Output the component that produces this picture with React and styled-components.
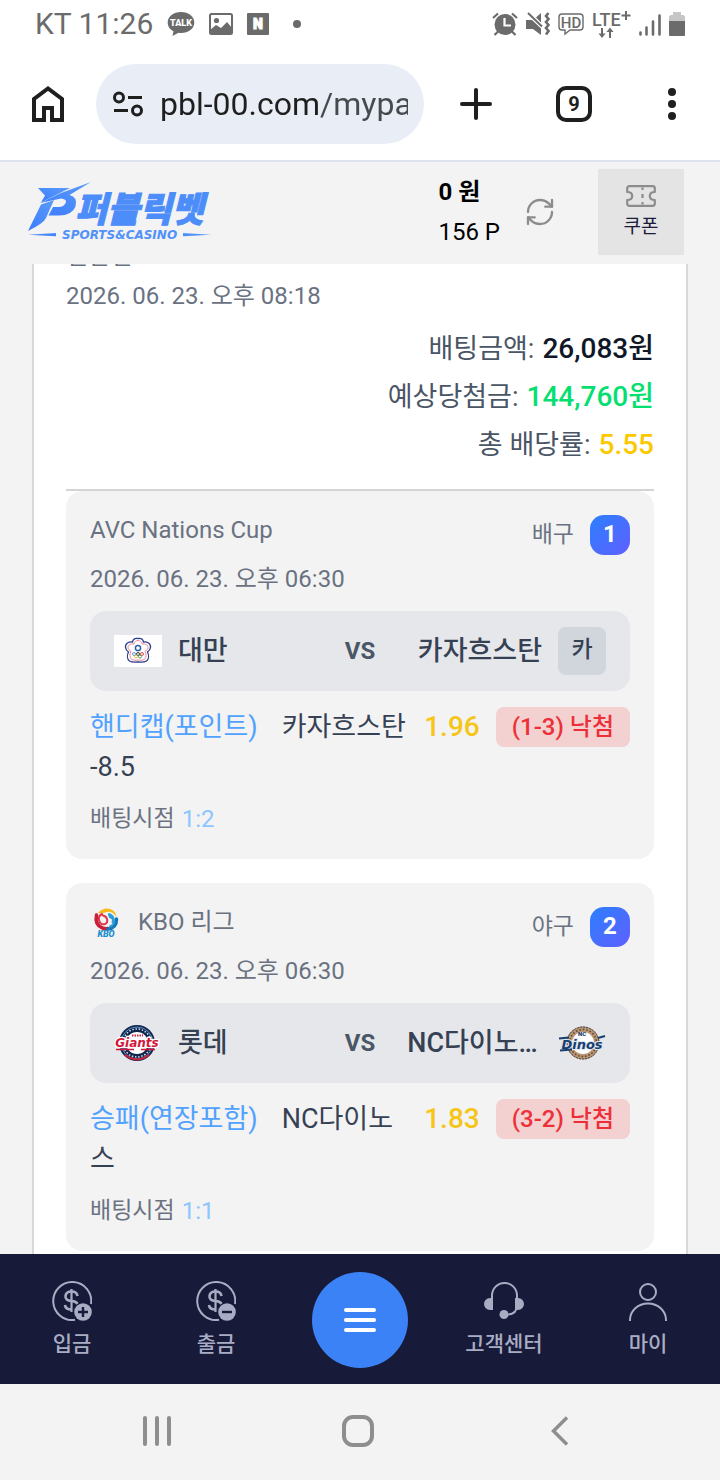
import React, { useState } from 'react';
import styled, { createGlobalStyle } from 'styled-components';
import { RefreshCw } from 'lucide-react';

const GlobalStyle = createGlobalStyle`
    *, *::before, *::after {
        box-sizing: border-box;
    }
    body {
        margin: 0;
        background: #f3f3f3;
        color: #364153;
        font-family: Roboto, "Noto Sans CJK KR", sans-serif;
        font-size: 24px;
        line-height: 32px;
    }
    button, input {
        font: inherit;
        color: inherit;
        border: 0;
        padding: 0;
        background: none;
    }
    h2, h3, p {
        margin: 0;
        font: inherit;
    }
    a {
        color: inherit;
        text-decoration: none;
    }
    svg {
        display: block;
        flex: none;
    }
`;

const Screen = styled.div`
    display: flex;
    flex-direction: column;
    height: 100vh;
    overflow: hidden;
`;

const StatusBar = styled.div`
    display: flex;
    flex: none;
    align-items: center;
    justify-content: space-between;
    height: 48px;
    padding: 0 35px;
    background: #fff;
    color: #6b6b6b;
`;

const StatusGroup = styled.div`
    display: flex;
    align-items: center;
    gap: ${props => props.$gap}px;
`;

const Clock = styled.span`
    font-size: 30px;
`;

const Toolbar = styled.div`
    display: flex;
    flex: none;
    align-items: center;
    height: 114px;
    padding: 0 24px;
    border-bottom: 2px solid #dde3ec;
    background: #fff;
    color: #1f1f1f;
`;

const ToolButton = styled.button`
    display: flex;
    flex: none;
    align-items: center;
    justify-content: center;
    width: 48px;
    height: 48px;
`;

const AddressBar = styled.label`
    display: flex;
    flex: 1;
    align-items: center;
    gap: 16px;
    min-width: 0;
    height: 80px;
    margin: 0 28px 0 24px;
    padding: 0 16px;
    border-radius: 40px;
    background: #e8edf6;
`;

const AddressInput = styled.input`
    flex: 1;
    min-width: 0;
    height: 48px;
    font-size: 32px;
    outline: none;
    color: transparent;
    background: linear-gradient(to right, #1f1f1f 159px, #474a4d 159px);
    background-clip: text;
    -webkit-background-clip: text;
`;

const ToolActions = styled.div`
    display: flex;
    gap: 50px;
`;

const TabCount = styled.span`
    display: flex;
    align-items: center;
    justify-content: center;
    width: 36px;
    height: 36px;
    border: 4px solid #1f1f1f;
    border-radius: 10px;
    font-size: 20px;
    font-weight: 700;
`;

const SiteHeader = styled.header`
    display: flex;
    flex: none;
    align-items: center;
    height: 102px;
    padding: 0 36px 2px 28px;
    background: #f3f3f3;
`;

const Balance = styled.div`
    display: flex;
    flex-direction: column;
    gap: 8px;
    margin-left: auto;
    margin-right: 24px;
    color: #000;
`;

const Cash = styled.strong`
    font-weight: 700;
`;

const RefreshButton = styled.button`
    margin-right: 42px;
    color: #8c8c8c;
`;

const CouponButton = styled.button`
    display: flex;
    flex-direction: column;
    align-items: center;
    justify-content: center;
    gap: 4px;
    width: 86px;
    height: 86px;
    padding-top: 4px;
    background: #e4e4e4;
    color: #1b1b3a;
    font-size: 19px;
`;

const Content = styled.main`
    flex: 1;
    min-height: 0;
    padding: 0 32px;
    overflow: hidden;
`;

const Panel = styled.section`
    margin-top: -24px;
    padding: 0 32px 24px;
    border: solid #d9d9d9;
    border-width: 0 2px;
    background: #fff;
    color: #6a7282;
`;

const BetKind = styled.h2`
    padding-bottom: 8px;
`;

const Totals = styled.dl`
    display: flex;
    flex-direction: column;
    gap: 8px;
    margin: 0;
    padding: 17px 0 24px;
    border-bottom: 2px solid #d4d4d4;
`;

const TotalRow = styled.div`
    display: flex;
    justify-content: flex-end;
    gap: 8px;
    font-size: 27px;
    line-height: 40px;
    color: #4a5565;

    dd {
        margin: 0;
        font-weight: 500;
        font-size: 28px;
        color: ${props => props.$color};
    }
`;

const CardList = styled.div`
    display: flex;
    flex-direction: column;
    gap: 24px;
`;

const Card = styled.article`
    padding: 24px;
    border-radius: 16px;
    background: #f3f3f3;
`;

const CardHead = styled.div`
    display: flex;
    align-items: flex-start;
    justify-content: space-between;
    height: 40px;
    margin-bottom: 8px;
`;

const League = styled.h3`
    display: flex;
    gap: 16px;
    line-height: 30px;
`;

const Sport = styled.div`
    display: flex;
    gap: 16px;
    font-size: 23px;
    line-height: 40px;
`;

const Order = styled.span`
    width: 40px;
    height: 40px;
    border-radius: 14px;
    background: linear-gradient(135deg, #2b7fff, #615fff);
    color: #fff;
    font-size: 24px;
    font-weight: 700;
    line-height: 38px;
    text-align: center;
`;

const Match = styled.div`
    display: grid;
    grid-template-columns: 1fr auto 1fr;
    align-items: center;
    gap: 32px;
    height: 80px;
    margin: 16px 0;
    padding: 0 24px;
    border-radius: 16px;
    background: #e5e7eb;
    color: #364153;
`;

const Team = styled.div`
    display: flex;
    align-items: center;
    justify-content: ${props => props.$away ? 'flex-end' : 'flex-start'};
    gap: 16px;
    min-width: 0;
`;

const TeamName = styled.span`
    overflow: hidden;
    font-size: 27px;
    font-weight: 500;
    line-height: 40px;
    text-overflow: ellipsis;
    white-space: nowrap;
`;

const Versus = styled.span`
    color: #4a5565;
    font-weight: 700;
    line-height: 30px;
`;

const Initial = styled.span`
    flex: none;
    width: 48px;
    height: 48px;
    border-radius: 8px;
    background: #d1d5dc;
    font-size: 23px;
    font-weight: 500;
    line-height: 46px;
    text-align: center;
`;

const BetRow = styled.div`
    display: flex;
    align-items: flex-start;
    gap: 16px;
    margin-bottom: 16px;
    font-size: 27px;
    line-height: 40px;
`;

const Pick = styled.p`
    flex: 1;
    min-width: 0;
    color: #364153;
`;

const Market = styled.span`
    margin-right: 24px;
    color: #51a2ff;
`;

const Odds = styled.span`
    color: #f5c518;
    font-size: 28px;
    font-weight: 500;
`;

const Result = styled.span`
    padding: 0 16px;
    border-radius: 8px;
    background: #f3d1d1;
    color: #ed2f38;
    font-size: 24px;
    font-weight: 500;
`;

const BetPoint = styled.p`
    display: flex;
    gap: 7px;
    font-size: 23px;
    line-height: 32px;

    span {
        color: #8ec5ff;
        font-size: 24px;
    }
`;

const BottomNav = styled.nav`
    display: grid;
    flex: none;
    grid-template-columns: repeat(5, 1fr);
    align-items: center;
    justify-items: center;
    height: 130px;
    padding-top: 2px;
    background: #171a38;
    color: #a9adc4;
`;

const NavLink = styled.a`
    display: flex;
    flex-direction: column;
    align-items: center;
    gap: 8px;
    font-size: 21px;
    font-weight: 500;
    line-height: 30px;
`;

const MenuButton = styled.button`
    display: flex;
    align-items: center;
    justify-content: center;
    width: 96px;
    height: 96px;
    border-radius: 50%;
    background: #3b82f6;
`;

const SystemNav = styled.div`
    display: grid;
    flex: none;
    grid-template-columns: repeat(3, 1fr);
    place-items: center;
    height: 96px;
    padding: 0 60px 2px 56px;
    background: #f3f3f3;
`;

const TalkIcon = () => (
    <svg width="28" height="26" viewBox="0 0 28 26">
        <path d="M14 1C6.500 1 .7 5.500 .7 11.500c0 3.800 2.300 7 5.800 8.800L5.500 25l6-3.200c.8.1 1.700.2 2.500.2 7.500 0 13.300-4.500 13.300-10.500S21.500 1 14 1z" fill="#6b6b6b" />
        <text x="14" y="15" fontSize="9" fontWeight="900" textAnchor="middle" fill="#fff">TALK</text>
    </svg>
);

const PhotoIcon = () => (
    <svg width="24" height="22" viewBox="0 0 24 22">
        <rect x="1" y="1" width="22" height="20" rx="1.500" fill="none" stroke="#6b6b6b" strokeWidth="2" />
        <circle cx="7.500" cy="7.500" r="2.600" fill="#6b6b6b" />
        <path d="M1 21v-4l6-5 5 3 6-6 5 6v6z" fill="#6b6b6b" />
    </svg>
);

const NoteIcon = () => (
    <svg width="22" height="22" viewBox="0 0 22 22">
        <rect width="22" height="22" rx="1" fill="#6b6b6b" />
        <text x="11" y="16" fontSize="14" fontWeight="900" textAnchor="middle" fill="#fff" stroke="#fff">N</text>
    </svg>
);

const AlarmIcon = () => (
    <svg width="26" height="24" viewBox="0 0 26 24" fill="none" stroke="#6b6b6b" strokeWidth="2.200">
        <path d="M1 6l5-4.500M25 6l-5-4.500M6 19.500L2.500 23M20 19.500l3.500 3.500" />
        <circle cx="13" cy="12.500" r="10.500" fill="#6b6b6b" stroke="none" />
        <path d="M12.500 6v7.500H19" stroke="#fff" />
    </svg>
);

const MuteIcon = () => (
    <svg width="24" height="24" viewBox="0 0 24 24" fill="#6b6b6b">
        <path d="M0 8h6l9 8.500V23l-8-6H0zM10 5.500L15 1v9.500z" />
        <path d="M2 1l14 13.500" stroke="#6b6b6b" strokeWidth="2" />
        <path d="M22.500 1l-2.500 3 2.500 3-2.500 3 2.500 3-2.500 3 2.500 3-2.500 3.500" fill="none" stroke="#6b6b6b" strokeWidth="2.600" />
    </svg>
);

const HdIcon = () => (
    <svg width="26" height="24" viewBox="0 0 26 24">
        <path d="M4 2h18a3 3 0 0 1 3 3v10a3 3 0 0 1-3 3H12l-5 4v-4H4a3 3 0 0 1-3-3V5a3 3 0 0 1 3-3z" fill="none" stroke="#6b6b6b" strokeWidth="1.400" />
        <text x="13" y="15.500" fontSize="15" fontWeight="500" textAnchor="middle" fill="#6b6b6b">HD</text>
    </svg>
);

const LteIcon = () => (
    <svg width="39" height="30" viewBox="0 0 39 30" fill="#6b6b6b">
        <text x="0" y="17" fontSize="18" fontWeight="500">LTE</text>
        <path d="M34 2v9M29.500 6.500h9" stroke="#6b6b6b" strokeWidth="2" />
        <path d="M10 19v8M18 21v8" stroke="#6b6b6b" strokeWidth="2" />
        <path d="M6.500 24.500h7L10 29zM14.500 23h7L18 18.500z" />
    </svg>
);

const SignalIcon = () => (
    <svg width="22" height="24" viewBox="0 0 22 24" stroke="#6b6b6b" strokeWidth="2.600" strokeLinecap="round">
        <path d="M1.500 20.500v2M7.500 15.500v7M14 9.500v13M20.500 3.500v19" />
    </svg>
);

const BatteryIcon = () => (
    <svg width="16" height="24" viewBox="0 0 16 24">
        <path d="M4 0h8v3h2.500L16 4.500V10H0V4.500L1.500 3H4z" fill="#c6c6c6" />
        <path d="M0 9h16v14a1 1 0 0 1-1 1H1a1 1 0 0 1-1-1z" fill="#6b6b6b" />
    </svg>
);

const HomeIcon = () => (
    <svg width="32" height="36" viewBox="0 0 32 36">
        <path d="M2 34V13L16 2.500 30 13v21H20V22h-8v12z" fill="none" stroke="#1f1f1f" strokeWidth="4" />
    </svg>
);

const TuneIcon = () => (
    <svg width="32" height="28" viewBox="0 0 32 28" fill="none" stroke="#1f1f1f" strokeWidth="3">
        <circle cx="7" cy="7.500" r="4.500" />
        <path d="M16 7.500h14M2 20.500h14" />
        <circle cx="25" cy="20.500" r="4.500" />
    </svg>
);

const SiteLogo = () => (
    <svg width="186" height="60" viewBox="0 0 186 60" fill="url(#brand)">
        <defs>
            <linearGradient id="brand" x1="0" y1="1" x2="1" y2="0">
                <stop offset="0" stopColor="#3b7cff" />
                <stop offset="1" stopColor="#5b9cf8" />
            </linearGradient>
        </defs>
        <path d="M10 6H42L13 20.500l4-7z" />
        <path d="M63 0L41.500 13q8.500 2 6 11.500Q44 33.500 31 33.500H20.500L25 25h5.500q6 0 7.500-5 .5-3-5-3.500L12 21l21-10z" />
        <path d="M13 22.500L26 18l-8 18q-2 5-18 13z" />
        <path d="M0 52.800l28-1.800v3.200zM183 52.800L155 51v3.200z" />
        <text x="47" y="40" fontFamily="'Noto Sans CJK KR', sans-serif" fontSize="35" fontWeight="900" fontStyle="italic" fill="#4c8dfa" stroke="#4c8dfa">퍼블릭벳</text>
        <text x="34" y="57" fontFamily="'DejaVu Sans', sans-serif" fontSize="12" fontWeight="700" fontStyle="italic" fill="#5191fa">SPORTS&amp;CASINO</text>
    </svg>
);

const CouponIcon = () => (
    <svg width="30" height="22" viewBox="0 0 30 22" fill="none" stroke="#8c8c8c" strokeWidth="2.200" strokeLinejoin="round">
        <path d="M3.500 1.200h23q2.300 0 2.300 2.300V7q-5 0-5 4t5 4v3.500q0 2.300-2.300 2.300h-23q-2.300 0-2.300-2.300V15q5 0 5-4t-5-4V3.500q0-2.300 2.300-2.300z" />
        <path d="M16.500 2.500V5M16.500 9v4M16.500 17v2.500" />
    </svg>
);

const TaiwanFlag = () => (
    <svg width="48" height="32" viewBox="0 0 48 32">
        <rect width="48" height="32" fill="#fff" />
        <g fill="none" strokeLinejoin="round">
            <path d="M24 3.500c3-.5 5 1 5.500 3.500 3.500-.5 7.500 1.500 7 5.500-.2 2-1.500 3.300-3 4.500 1.500 3 1.500 7-1 9-2.500 1.500-5.500 1.300-8.500 1-3 .3-6 .5-8.500-1-2.500-2-2.500-6-1-9-1.500-1.200-2.800-2.500-3-4.500-.5-4 3.500-6 7-5.500.5-2.500 2.500-4 5.500-3.500z" stroke="#2c3d8f" strokeWidth="1.300" />
            <path d="M24 5.500c2.200 0 3.500 1.300 4 3.500 3-.5 6 .8 6 3.500 0 1.800-1.300 3-3 3.800 1.500 3 1.500 6-.5 8-2 1.200-4 1-6.500.7-2.500.3-4.500.5-6.500-.7-2-2-2-5-.5-8-1.700-.8-3-2-3-3.800 0-2.700 3-4 6-3.500.5-2.200 1.800-3.500 4-3.500z" stroke="#e8899a" />
            <circle cx="24" cy="13" r="2.600" stroke="#2f5ea8" strokeWidth="1.500" />
            <circle cx="20" cy="19" r="1.500" stroke="#5b9bd5" />
            <circle cx="24" cy="19" r="1.500" stroke="#333" />
            <circle cx="28" cy="19" r="1.500" stroke="#d84a4a" />
            <circle cx="22" cy="21.500" r="1.500" stroke="#e6b93c" />
            <circle cx="26" cy="21.500" r="1.500" stroke="#4fa267" />
        </g>
    </svg>
);

const KboLogo = () => (
    <svg width="32" height="32" viewBox="0 0 32 32" fill="none" strokeLinecap="round">
        <path d="M8 6Q13 0 20 2q6 2 6.500 8-4-6-10-5-4 2-8.500 1z" fill="#fbb81b" />
        <path d="M6.500 8q-2 10 6 13 3 1 5 .5" stroke="#c91f38" strokeWidth="3.500" />
        <path d="M12 7q-4 2-3 6 1 5 6 4 3-1 2-5-1-3-4-3.500" stroke="#e0364a" strokeWidth="2" />
        <path d="M26.500 12q0 9-8.500 10" stroke="#1478b6" strokeWidth="3.500" />
        <path d="M19 7q5 2 5 7 0 4-4 5.500M19 7q0 3 2.500 4t1 4" stroke="#2a9fd8" strokeWidth="2" />
        <text x="16" y="30" fontSize="9" fontWeight="900" fontStyle="italic" textAnchor="middle" fill="#1d8fce">KBO</text>
    </svg>
);

const GiantsLogo = () => (
    <svg width="48" height="40" viewBox="0 0 48 40">
        <circle cx="23" cy="20" r="18" fill="#10264d" />
        <circle cx="23" cy="20" r="16" fill="none" stroke="#5d93c9" />
        <circle cx="23" cy="20" r="14" fill="none" stroke="#d7e0ea" strokeWidth="1.500" strokeDasharray="1.500 1.700" />
        <circle cx="23" cy="20" r="11" fill="#fff" />
        <path d="M10 32a18 18 0 0 0 26 0l-2-1a16 16 0 0 1-22 0z" fill="#c8213c" />
        <path d="M18 12.500h11" stroke="#c8213c" strokeWidth="2" strokeDasharray="1.500 1" />
        <text x="23" y="24" fontFamily="'DejaVu Sans', sans-serif" fontSize="12" fontWeight="700" fontStyle="italic" textAnchor="middle" fill="#d2163a" stroke="#fff" strokeWidth="2.500" paintOrder="stroke">Giants</text>
        <path d="M2 26.500h18M27 26.500h14" stroke="#d2163a" strokeWidth="1.300" />
    </svg>
);

const DinosLogo = () => (
    <svg width="48" height="40" viewBox="0 0 48 40">
        <circle cx="25" cy="20" r="16.500" fill="#b99671" />
        <circle cx="25" cy="20" r="16" fill="none" stroke="#3a4048" strokeDasharray="2 1" />
        <circle cx="25" cy="20" r="13.500" fill="none" stroke="#55463a" strokeWidth="1.500" strokeDasharray="1.500 2" />
        <circle cx="25" cy="20" r="11" fill="#fff" />
        <text x="24" y="13" fontSize="6" fontWeight="900" textAnchor="middle" fill="#173a66">NC</text>
        <text x="24" y="26" fontFamily="'DejaVu Sans', sans-serif" fontSize="13" fontWeight="700" fontStyle="italic" textAnchor="middle" fill="#173f70" stroke="#dfe5ec" strokeWidth="2" paintOrder="stroke">Dinos</text>
        <path d="M1 15.500l10-1M2 27.500l12-1M40 15l7-2" stroke="#173f70" strokeWidth="2" />
    </svg>
);

const CoinIcon = ({ minus }) => (
    <svg width="40" height="40" viewBox="0 0 40 40" fill="none" stroke="#a9adc4" strokeWidth="2">
        <path d="M39 23a19 19 0 1 0-16 15.800" />
        <path d="M25.500 15q-.5-4.500-6-4.500t-6 4.500 6 5 6.500 5M13 24q.5 4.500 6.500 4.500" strokeWidth="2.600" />
        <path d="M19.500 8v23" strokeWidth="2.200" />
        <circle cx="31" cy="31" r="10" fill="#171a38" stroke="none" />
        <circle cx="31" cy="31" r="8.800" fill="#a9adc4" stroke="none" />
        <path d={minus ? 'M26 31h10' : 'M26 31h10M31 26v10'} stroke="#171a38" strokeWidth="2.400" />
    </svg>
);

const HeadsetIcon = () => (
    <svg width="40" height="40" viewBox="0 0 40 40" fill="#a9adc4">
        <path d="M8 24V14.500a12.500 12.500 0 0 1 25 0V24q0 9-9 9.500h-4" fill="none" stroke="#a9adc4" strokeWidth="2" />
        <path d="M9 17v12H6A6 6 0 0 1 6 17zM31 17v12h3a6 6 0 0 0 0-12z" />
        <circle cx="20" cy="33.500" r="4.500" />
    </svg>
);

const PersonIcon = () => (
    <svg width="40" height="40" viewBox="0 0 40 40" fill="none" stroke="#a9adc4" strokeWidth="2">
        <circle cx="20" cy="11" r="8" />
        <path d="M2 40v-1a18 16.500 0 0 1 36 0v1" />
    </svg>
);

const bets = [
    {
        id: 1,
        league: 'AVC Nations Cup',
        sport: '배구',
        date: '2026. 06. 23. 오후 06:30',
        home: '대만',
        homeIcon: <TaiwanFlag />,
        away: '카자흐스탄',
        awayIcon: <Initial>카</Initial>,
        market: '핸디캡(포인트)',
        pick: '카자흐스탄 -8.5',
        odds: '1.96',
        result: '(1-3) 낙첨',
        point: '1:2'
    },
    {
        id: 2,
        league: 'KBO 리그',
        leagueIcon: <KboLogo />,
        sport: '야구',
        date: '2026. 06. 23. 오후 06:30',
        home: '롯데',
        homeIcon: <GiantsLogo />,
        away: 'NC다이노스',
        awayIcon: <DinosLogo />,
        market: '승패(연장포함)',
        pick: 'NC다이노스',
        odds: '1.83',
        result: '(3-2) 낙첨',
        point: '1:1'
    }
];

const BetCard = ({ bet }) => (
    <Card>
        <CardHead>
            <League>{bet.leagueIcon}{bet.league}</League>
            <Sport>
                {bet.sport}
                <Order>{bet.id}</Order>
            </Sport>
        </CardHead>
        <p>{bet.date}</p>
        <Match>
            <Team>
                {bet.homeIcon}
                <TeamName>{bet.home}</TeamName>
            </Team>
            <Versus>VS</Versus>
            <Team $away>
                <TeamName>{bet.away}</TeamName>
                {bet.awayIcon}
            </Team>
        </Match>
        <BetRow>
            <Pick><Market>{bet.market}</Market>{bet.pick}</Pick>
            <Odds>{bet.odds}</Odds>
            <Result>{bet.result}</Result>
        </BetRow>
        <BetPoint>배팅시점 <span>{bet.point}</span></BetPoint>
    </Card>
);

const App = () => {

    const [ address, saveAddress ] = useState('pbl-00.com/mypage');

    return (
        <Screen>
            <GlobalStyle />

            <StatusBar>
                <StatusGroup $gap={14}>
                    <Clock>KT 11:26</Clock>
                    <TalkIcon />
                    <PhotoIcon />
                    <NoteIcon />
                    <svg width="30" height="8" viewBox="0 0 30 8"><circle cx="14" cy="4" r="4" fill="#6b6b6b" /></svg>
                </StatusGroup>
                <StatusGroup $gap={8}>
                    <AlarmIcon />
                    <MuteIcon />
                    <HdIcon />
                    <LteIcon />
                    <SignalIcon />
                    <BatteryIcon />
                </StatusGroup>
            </StatusBar>

            <Toolbar>
                <ToolButton type="button" aria-label="홈"><HomeIcon /></ToolButton>
                <AddressBar>
                    <TuneIcon />
                    <AddressInput
                        type="text"
                        name="address"
                        aria-label="주소"
                        value={address}
                        onChange={e => saveAddress(e.target.value)}
                    />
                </AddressBar>
                <ToolActions>
                    <ToolButton type="button" aria-label="새 탭">
                        <svg width="32" height="32" viewBox="0 0 32 32" stroke="#1f1f1f" strokeWidth="4" strokeLinecap="round">
                            <path d="M16 2v28M2 16h28" />
                        </svg>
                    </ToolButton>
                    <ToolButton type="button"><TabCount>9</TabCount></ToolButton>
                    <ToolButton type="button" aria-label="더보기">
                        <svg width="8" height="32" viewBox="0 0 8 32" fill="#1f1f1f">
                            <circle cx="4" cy="4" r="4" />
                            <circle cx="4" cy="16" r="4" />
                            <circle cx="4" cy="28" r="4" />
                        </svg>
                    </ToolButton>
                </ToolActions>
            </Toolbar>

            <SiteHeader>
                <a href="#home" aria-label="홈"><SiteLogo /></a>
                <Balance>
                    <Cash>0 원</Cash>
                    <span>156 P</span>
                </Balance>
                <RefreshButton type="button" aria-label="새로고침">
                    <RefreshCw size={32} strokeWidth={1.75} />
                </RefreshButton>
                <CouponButton type="button">
                    <CouponIcon />
                    쿠폰
                </CouponButton>
            </SiteHeader>

            <Content>
                <Panel>
                    <BetKind>일반전</BetKind>
                    <p>2026. 06. 23. 오후 08:18</p>
                    <Totals>
                        <TotalRow $color="#101828">
                            <dt>배팅금액:</dt>
                            <dd>26,083원</dd>
                        </TotalRow>
                        <TotalRow $color="#05df72">
                            <dt>예상당첨금:</dt>
                            <dd>144,760원</dd>
                        </TotalRow>
                        <TotalRow $color="#fcc800">
                            <dt>총 배당률:</dt>
                            <dd>5.55</dd>
                        </TotalRow>
                    </Totals>
                    <CardList>
                        { bets.map(bet => <BetCard key={bet.id} bet={bet} />) }
                    </CardList>
                </Panel>
            </Content>

            <BottomNav>
                <NavLink href="#deposit"><CoinIcon />입금</NavLink>
                <NavLink href="#withdraw"><CoinIcon minus />출금</NavLink>
                <MenuButton type="button" aria-label="메뉴">
                    <svg width="32" height="24" viewBox="0 0 32 24" stroke="#fff" strokeWidth="4" strokeLinecap="round">
                        <path d="M2 2h28M2 12h28M2 22h28" />
                    </svg>
                </MenuButton>
                <NavLink href="#support"><HeadsetIcon />고객센터</NavLink>
                <NavLink href="#my"><PersonIcon />마이</NavLink>
            </BottomNav>

            <SystemNav>
                <ToolButton type="button" aria-label="최근 앱">
                    <svg width="28" height="30" viewBox="0 0 28 30" stroke="#8e8e8e" strokeWidth="4" strokeLinecap="round">
                        <path d="M2 2v26M14 2v26M26 2v26" />
                    </svg>
                </ToolButton>
                <ToolButton type="button" aria-label="홈 화면">
                    <svg width="32" height="32" viewBox="0 0 32 32">
                        <rect x="2" y="2" width="28" height="28" rx="9" fill="none" stroke="#8e8e8e" strokeWidth="4" />
                    </svg>
                </ToolButton>
                <ToolButton type="button" aria-label="뒤로">
                    <svg width="17" height="30" viewBox="0 0 17 30" fill="none" stroke="#8e8e8e" strokeWidth="3.500">
                        <path d="M16 1.500L2.500 15 16 28.500" />
                    </svg>
                </ToolButton>
            </SystemNav>
        </Screen>
    );
}

export default App;
